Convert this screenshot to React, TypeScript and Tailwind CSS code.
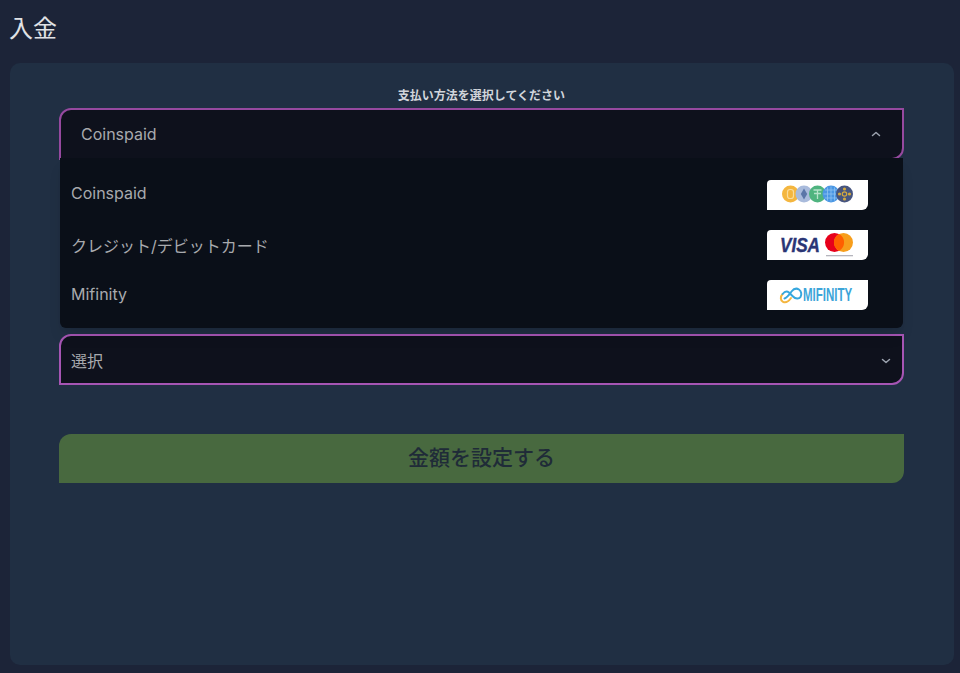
import React from 'react'

function ChevronUp() {
  return (
    <svg width="12" height="12" viewBox="0 0 12 12" fill="none" stroke="#9ca3af" strokeWidth="1.5" strokeLinecap="round" strokeLinejoin="round">
      <path d="M2.5 7.5 6 4.5l3.5 3" />
    </svg>
  )
}

function ChevronDown() {
  return (
    <svg width="12" height="12" viewBox="0 0 12 12" fill="none" stroke="#9ca3af" strokeWidth="1.5" strokeLinecap="round" strokeLinejoin="round">
      <path d="M2.5 4.5 6 7.5l3.5-3" />
    </svg>
  )
}

function CoinspaidLogo() {
  return (
    <svg width="101" height="30" viewBox="0 0 101 30">
      <circle cx="23.500" cy="14" r="8.500" fill="#f4b63f" />
      <rect x="20.500" y="9.500" width="6" height="9" rx="2.500" fill="none" stroke="#fbdc9a" strokeWidth="1.200" />
      <circle cx="37" cy="14" r="8.500" fill="#a9bbdc" />
      <path d="M37 8.500l3.200 5.500-3.200 5.500-3.200-5.500z" fill="#5a76a8" />
      <circle cx="50.500" cy="14" r="8.500" fill="#4fb47f" />
      <path d="M46.500 10h8M50.500 10v9M47 13.500h7" stroke="#b5e3ca" strokeWidth="1.300" fill="none" />
      <circle cx="64" cy="14" r="8.500" fill="#4a97e4" />
      <path d="M56.500 14h15M64 6.500v15M58 10h12M58 18h12M60.500 7.500v13M67.500 7.500v13" stroke="#8fc3f1" strokeWidth="0.800" fill="none" />
      <circle cx="77.500" cy="14" r="8.500" fill="#47557f" />
      <circle cx="77.500" cy="14" r="2.200" fill="none" stroke="#d4a93f" strokeWidth="1.200" />
      <circle cx="77.500" cy="9" r="1.600" fill="#d4a93f" />
      <circle cx="77.500" cy="19" r="1.600" fill="#d4a93f" />
      <circle cx="72.500" cy="14" r="1.600" fill="#d4a93f" />
      <circle cx="82.500" cy="14" r="1.600" fill="#d4a93f" />
    </svg>
  )
}

function CardLogo() {
  return (
    <svg width="101" height="30" viewBox="0 0 101 30">
      <text x="13" y="22" fontFamily="Liberation Sans, sans-serif" fontSize="20" fontWeight="700" fontStyle="italic" fill="#2a3575" textLength="40" lengthAdjust="spacingAndGlyphs" stroke="#2a3575" strokeWidth="0.400">VISA</text>
      <circle cx="67.500" cy="12.500" r="9.500" fill="#e7001b" />
      <circle cx="76.500" cy="12.500" r="9.500" fill="#f79e1b" />
      <path d="M72 4.100a9.500 9.500 0 0 1 0 16.800 9.500 9.500 0 0 1 0-16.800z" fill="#ff5f00" />
      <rect x="59" y="25" width="27" height="1.300" fill="#b5b5bd" />
    </svg>
  )
}

function MifinityLogo() {
  return (
    <svg width="101" height="30" viewBox="0 0 101 30">
      <path d="M24 18c-2.500 3.500-5.500 5-8 3.800-2.800-1.400-2.800-5.200-.4-7.800" fill="none" stroke="#f4b63f" strokeWidth="2" strokeLinecap="round" />
      <path d="M15.600 14c2-2.500 4.500-3 6.400-1.500l4 4c2.500 2.500 6 2.800 7.500 0.500 1.500-2.400 0.800-6-1.500-7.500-2.500-1.500-5.500-0.500-7.500 2-2 2.500-4 6-7 7" fill="none" stroke="#36a7de" strokeWidth="2" strokeLinecap="round" />
      <text transform="translate(36 21) scale(0.64 1)" fontFamily="Liberation Sans, sans-serif" fontSize="18" fontWeight="700" fill="#3da5d9">MIFINITY</text>
    </svg>
  )
}

const options = [
  { name: 'Coinspaid', Logo: CoinspaidLogo, textClass: 'mb-[4px]' },
  { name: 'クレジット/デビットカード', Logo: CardLogo, textClass: 'mt-[2px]' },
  { name: 'Mifinity', Logo: MifinityLogo, textClass: 'mb-[2px]' },
]

export default function App() {
  return (
    <div className="h-[673px] overflow-hidden bg-[#1c2438] font-['Inter','Noto_Sans_CJK_JP',sans-serif]">
      <h1 className="h-[63px] pl-[9px] pt-[13px] text-[24px] leading-[32px] text-[#e0e2e6]">入金</h1>

      <div className="ml-[10px] flex h-[602px] w-[944px] flex-col rounded-[10px] bg-[#202f43] pl-[49px] pr-[50px] pt-[25px]">
        <label className="block h-[20px] text-center text-[12px] font-bold leading-[16px] text-[#d1d5db]">
          支払い方法を選択してください
        </label>

        <div className="relative">
          <div className="flex h-[52px] items-center justify-between rounded-tl-xl rounded-br-xl border-2 border-[#96499f] bg-[#0e111c] pl-[20px] pr-[20px] text-[16px] text-[#a8aaae]">
            <span>Coinspaid</span>
            <ChevronUp />
          </div>

          <div className="absolute left-[1px] right-[1px] top-[50px] z-10 flex h-[170px] flex-col rounded-b-md bg-[#0a0f18] pt-[10px] shadow-lg">
            {options.map(({ name, Logo, textClass }) => (
              <div key={name} className="flex h-[50px] items-center justify-between pl-[11px] pr-[35px] pt-[3px] text-[16px] text-[#a8aaae]">
                <span className={textClass}>{name}</span>
                <div className="h-[30px] w-[101px] rounded-tl-[4px] rounded-br-[6px] bg-white">
                  <Logo />
                </div>
              </div>
            ))}
          </div>
        </div>

        <div className="mt-[174px] flex h-[51px] items-center justify-between rounded-tl-xl rounded-br-xl border-2 border-[#a655b4] bg-[#0e111c] pl-[10px] pr-[10px] pt-[2px] text-[16px] text-[#a8aaae]">
          <span>選択</span>
          <ChevronDown />
        </div>

        <button className="mt-[49px] h-[49px] w-full rounded-tl-xl rounded-br-xl bg-[#48693f] pb-[2px] text-center text-[21px] font-medium text-[#1f2b38]">
          金額を設定する
        </button>
      </div>
    </div>
  )
}
